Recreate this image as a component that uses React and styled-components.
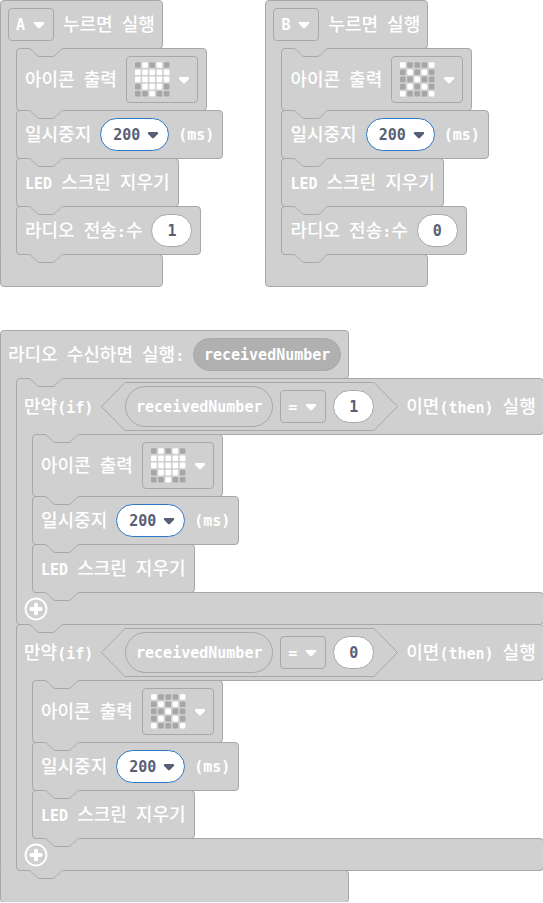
import React from "react";
import styled, { createGlobalStyle, css } from "styled-components";

const color = {
  block: "#d0d0d0",
  line: "#a8a8a8",
  shade: "#b0b0b0",
  pixelOff: "#a6a6a6",
  ink: "#575e75",
  focus: "#2a78c8",
  text: "#ffffff",
};

const mono = '"DejaVu Sans Mono", "Liberation Mono", monospace';
const hangul = '"Noto Sans CJK KR", "Noto Sans", sans-serif';

const GlobalStyle = createGlobalStyle`
  *, *::before, *::after { box-sizing: border-box; }
  body { margin: 0; background: #fff; }
  button, input, select { font: inherit; color: inherit; margin: 0; }
`;

const Workspace = styled.main`
  display: flex;
  flex-direction: column;
  gap: 44px;
  font: 700 15px/24px ${mono};
  color: ${color.text};
  white-space: nowrap;
`;

const ScriptRow = styled.div`
  display: flex;
  gap: 42px;
`;

const Container = styled.section`
  position: relative;
  display: grid;
  grid-template-columns: max-content 1fr;
  width: max-content;
  margin-bottom: -1px;
`;

const surface = css`
  position: relative;
  background: ${color.block};
  border: 1px solid ${color.line};
  border-radius: 4px;
`;

const Statement = styled.div`
  ${surface}
  display: flex;
  align-items: center;
  gap: 9px;
  width: max-content;
  min-height: ${(p) => (p.$tall ? 63 : 49)}px;
  margin-bottom: -1px;
  padding: 0 8px;
`;

const Head = styled.header`
  ${surface}
  grid-column: 1;
  display: flex;
  align-items: center;
  gap: ${(p) => (p.$branch ? 8 : 9)}px;
  min-height: ${(p) => (p.$branch ? 57 : 49)}px;
  padding: 0 7px;
  border-bottom-left-radius: 0;
`;

const Arm = styled.div`
  grid-column: 1 / -1;
  display: flex;
  margin-top: -1px;
`;

const Spine = styled.div`
  position: relative;
  z-index: 1;
  width: 20px;
  margin-right: -4px;
  background: ${color.block};
  border-left: 1px solid ${color.line};
`;

const Stack = styled.div`
  position: relative;
  z-index: 2;
  display: flex;
  flex-direction: column;
`;

const Foot = styled.footer`
  ${surface}
  grid-column: 1;
  display: flex;
  align-items: center;
  min-height: 33px;
  padding: 0 7px;
  border-top-left-radius: 0;

  &::before {
    content: "";
    position: absolute;
    top: -1px;
    left: 0;
    width: 17px;
    height: 1px;
    background: ${color.block};
  }
`;

const NotchShape = styled.svg`
  position: absolute;
  top: -1px;
  left: ${(p) => (p.$inset ? 27 : 11)}px;
  z-index: 3;
  width: 36px;
  height: 10px;
`;

function Notch({ inset }) {
  return (
    <NotchShape $inset={inset} viewBox="0 0 36 10" aria-hidden="true">
      <path
        d="M0 0V.5C2 .5 3 1.500 4 2.500L8 6.500C9 7.500 10 8.500 12 8.500H24C26 8.500 27 7.500 28 6.500L32 2.500C33 1.500 34 .5 36 .5V0Z"
        fill={color.block}
      />
      <path
        d="M0 .5C2 .5 3 1.500 4 2.500L8 6.500C9 7.500 10 8.500 12 8.500H24C26 8.500 27 7.500 28 6.500L32 2.500C33 1.500 34 .5 36 .5"
        fill="none"
        stroke={color.line}
      />
    </NotchShape>
  );
}

const LabelText = styled.span`
  white-space: pre;
`;

const Hangul = styled.span`
  font: 500 18px/24px ${hangul};
`;

function Label({ children }) {
  const runs = children.split(/([가-힣]+)/).filter(Boolean);
  return (
    <LabelText>
      {runs.map((run, i) =>
        /[가-힣]/.test(run) ? <Hangul key={i}>{run}</Hangul> : run
      )}
    </LabelText>
  );
}

const CaretShape = styled.svg`
  flex: none;
  width: 12px;
  height: 8px;
  pointer-events: none;
`;

function Caret() {
  return (
    <CaretShape viewBox="0 0 12 8" aria-hidden="true">
      <path
        d="M2 1H10C11.300 1 11.600 2.200 10.800 3L7.200 6.700C6.500 7.400 5.500 7.400 4.800 6.700L1.200 3C.4 2.200 .7 1 2 1Z"
        fill="currentColor"
      />
    </CaretShape>
  );
}

const SelectBox = styled.span`
  display: flex;
  flex: none;
  align-items: center;
  width: 46px;
  height: 33px;
  border: 1px solid ${color.line};
  border-radius: 4px;

  select {
    flex: none;
    width: 100%;
    height: 31px;
    padding: 0 0 0 7px;
    border: 0;
    background: transparent;
    appearance: none;
    outline: 0;
  }

  option {
    color: ${color.ink};
  }

  svg {
    margin-left: -20px;
  }
`;

function Select({ label, value, options }) {
  return (
    <SelectBox>
      <select aria-label={label} defaultValue={value}>
        {options.map((o) => (
          <option key={o}>{o}</option>
        ))}
      </select>
      <Caret />
    </SelectBox>
  );
}

const NumberInput = styled.input`
  width: 41px;
  height: 33px;
  padding: 0;
  border: 1px solid ${color.line};
  border-radius: 17px;
  background: #fff;
  color: ${color.ink};
  text-align: center;
  outline: 0;
`;

const Combo = styled.span`
  display: flex;
  align-items: center;
  gap: 6px;
  height: 33px;
  padding: 0 9px 0 12px;
  border: 1px solid ${color.focus};
  border-radius: 17px;
  background: #fff;
  color: ${color.ink};

  input {
    width: 28px;
    padding: 0;
    border: 0;
    background: transparent;
    outline: 0;
  }

  button {
    display: flex;
    padding: 0;
    border: 0;
    background: transparent;
  }
`;

const Variable = styled.span`
  display: flex;
  align-items: center;
  justify-content: center;
  min-width: 148px;
  height: ${(p) => (p.$nested ? 41 : 33)}px;
  border: 1px solid ${color.line};
  border-radius: 21px;
  background: ${(p) => (p.$nested ? color.block : color.shade)};
`;

const Condition = styled.div`
  display: flex;
`;

const ConditionBody = styled.div`
  display: flex;
  align-items: center;
  gap: 7px;
  height: 49px;
  border: solid ${color.line};
  border-width: 1px 0;
`;

const HexEnd = styled.svg`
  flex: none;
  width: 24px;
  height: 49px;
`;

const IconButton = styled.button`
  display: flex;
  align-items: center;
  gap: 8px;
  height: 47px;
  padding: 0 7px;
  border: 1px solid ${color.line};
  border-radius: 4px;
  background: transparent;
`;

const LedGrid = styled.svg`
  width: 36px;
  height: 36px;
`;

const icons = {
  heart: [".#.#.", "#####", "#####", ".###.", "..#.."],
  cross: ["#...#", ".#.#.", "..#..", ".#.#.", "#...#"],
};

function LedIcon({ name }) {
  return (
    <IconButton type="button" aria-label={name}>
      <LedGrid viewBox="0 0 36 36" aria-hidden="true">
        {icons[name].flatMap((row, y) =>
          [...row].map((dot, x) => (
            <rect
              key={`${x}-${y}`}
              x={1 + x * 7.2}
              y={y * 7.2 + 0.2}
              width="5.600"
              height="5.600"
              rx="1"
              fill={dot === "#" ? color.text : color.pixelOff}
            />
          ))
        )}
      </LedGrid>
      <Caret />
    </IconButton>
  );
}

const AddButton = styled.button`
  display: flex;
  padding: 0;
  border: 0;
  background: transparent;

  svg {
    width: 24px;
    height: 24px;
  }
`;

function AddBranch() {
  return (
    <AddButton type="button" aria-label="add">
      <svg viewBox="0 0 24 24" aria-hidden="true">
        <circle cx="12" cy="12" r="10.500" fill="none" stroke="#fff" strokeWidth="1.800" />
        <path d="M12 7.500V16.500M7.500 12H16.500" stroke="#fff" strokeWidth="4" strokeLinecap="round" />
      </svg>
    </AddButton>
  );
}

function CBlock({ head, branch, children }) {
  return (
    <Container>
      <Head $branch={branch}>
        {branch && <Notch />}
        {head}
      </Head>
      <Arm>
        <Spine />
        <Stack>{children}</Stack>
      </Arm>
      <Foot>
        <Notch inset />
        {branch && <AddBranch />}
      </Foot>
    </Container>
  );
}

function ShowIcon({ name }) {
  return (
    <Statement $tall>
      <Notch />
      <Label>아이콘 출력</Label>
      <LedIcon name={name} />
    </Statement>
  );
}

function Pause() {
  return (
    <Statement>
      <Notch />
      <Label>일시중지</Label>
      <Combo>
        <input aria-label="일시중지 (ms)" defaultValue="200" />
        <button type="button" aria-label="ms">
          <Caret />
        </button>
      </Combo>
      <Label>(ms)</Label>
    </Statement>
  );
}

function ClearScreen() {
  return (
    <Statement>
      <Notch />
      <Label>LED 스크린 지우기</Label>
    </Statement>
  );
}

function ButtonScript({ button, icon, value }) {
  return (
    <CBlock
      head={
        <>
          <Select label="누르면 실행" value={button} options={["A", "B"]} />
          <Label>누르면 실행</Label>
        </>
      }
    >
      <ShowIcon name={icon} />
      <Pause />
      <ClearScreen />
      <Statement>
        <Notch />
        <Label>라디오 전송:수</Label>
        <NumberInput aria-label="라디오 전송:수" defaultValue={value} />
      </Statement>
    </CBlock>
  );
}

function IfBlock({ value, icon }) {
  return (
    <CBlock
      branch
      head={
        <>
          <Label>만약(if)</Label>
          <Condition>
            <HexEnd viewBox="0 0 24 49" aria-hidden="true">
              <path d="M24 .5L.5 24.500L24 48.500" fill="none" stroke={color.line} />
            </HexEnd>
            <ConditionBody>
              <Variable $nested>receivedNumber</Variable>
              <Select label="=" value="=" options={["=", "≠", "<", ">"]} />
              <NumberInput aria-label="receivedNumber =" defaultValue={value} />
            </ConditionBody>
            <HexEnd viewBox="0 0 24 49" aria-hidden="true">
              <path d="M0 .5L23.500 24.500L0 48.500" fill="none" stroke={color.line} />
            </HexEnd>
          </Condition>
          <Label>이면(then) 실행</Label>
        </>
      }
    >
      <ShowIcon name={icon} />
      <Pause />
      <ClearScreen />
    </CBlock>
  );
}

export default function App() {
  return (
    <>
      <GlobalStyle />
      <Workspace>
        <ScriptRow>
          <ButtonScript button="A" icon="heart" value="1" />
          <ButtonScript button="B" icon="cross" value="0" />
        </ScriptRow>
        <CBlock
          head={
            <>
              <Label>라디오 수신하면 실행:</Label>
              <Variable>receivedNumber</Variable>
            </>
          }
        >
          <IfBlock value="1" icon="heart" />
          <IfBlock value="0" icon="cross" />
        </CBlock>
      </Workspace>
    </>
  );
}
